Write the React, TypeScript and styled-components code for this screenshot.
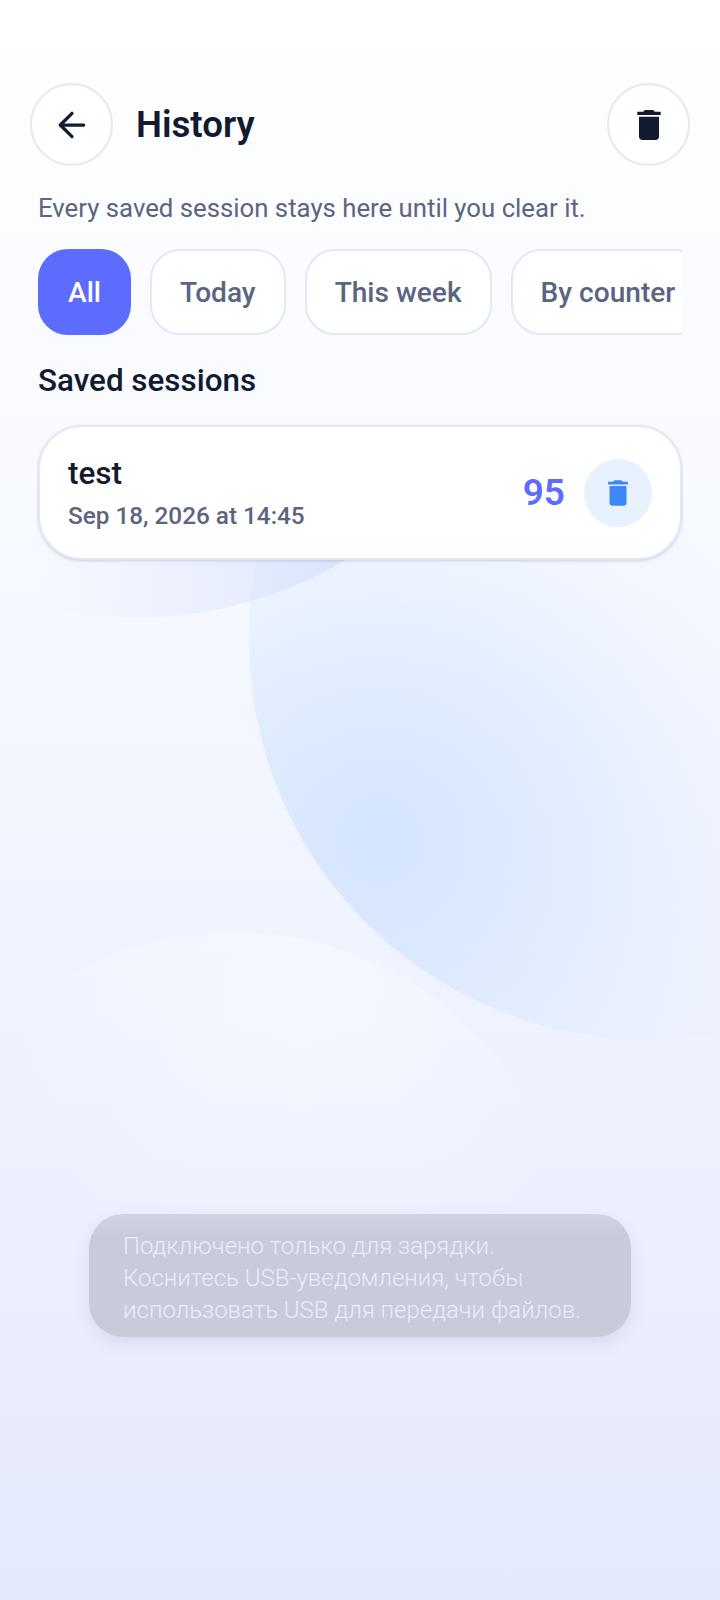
import React from "react";
import styled, { createGlobalStyle } from "styled-components";
import { MdDelete } from "react-icons/md";
import { ArrowLeft } from "lucide-react";

const GlobalStyle = createGlobalStyle`
  html, body {
    margin: 0;
    padding: 0;
  }
  body {
    font-family: Roboto, "Noto Sans", sans-serif;
  }
`;

const filters = ["All", "Today", "This week", "By counter"];

const App = () => {
  return (
    <Screen>
      <GlobalStyle />
      <CornerBlob />
      <BigBlob />
      <LowBlob />
      <Content>
        <Header>
          <TitleGroup>
            <RoundButton aria-label="Back">
              <ArrowLeft size={40} strokeWidth={1.95} color="#111a2e" />
            </RoundButton>
            <Title>History</Title>
          </TitleGroup>
          <RoundButton aria-label="Clear history">
            <MdDelete size={40} color="#111a2e" />
          </RoundButton>
        </Header>
        <Body>
          <Subtitle>Every saved session stays here until you clear it.</Subtitle>
          <Filters>
            {filters.map((label, i) => (
              <Chip key={label} $active={i === 0}>
                {label}
              </Chip>
            ))}
          </Filters>
          <SectionTitle>Saved sessions</SectionTitle>
          <Card>
            <CardInfo>
              <CardName>test</CardName>
              <CardDate>Sep 18, 2026 at 14:45</CardDate>
            </CardInfo>
            <CardSide>
              <Count>95</Count>
              <DeleteButton aria-label="Delete session">
                <MdDelete size={34} color="#3f88fb" />
              </DeleteButton>
            </CardSide>
          </Card>
        </Body>
      </Content>
      <Toast>
        Подключено только для зарядки.
        <br />
        Коснитесь USB-уведомления, чтобы
        <br />
        использовать USB для передачи файлов.
      </Toast>
    </Screen>
  );
};

const Screen = styled.div`
  position: relative;
  width: 720px;
  height: 1600px;
  overflow: hidden;
  background: linear-gradient(180deg, #ffffff 0%, #f6f9ff 35%, #edf1fe 71%, #e4e9fc 100%);
`;

/* the tinted part only starts below the card's top edge */
const BigBlob = styled.div`
  position: absolute;
  left: 249px;
  top: 240px;
  width: 800px;
  height: 800px;
  border-radius: 50%;
  background: radial-gradient(
      circle 440px at 131px 413px,
      rgba(205, 224, 255, 0.8) 0,
      rgba(205, 224, 255, 0.55) 130px,
      rgba(205, 224, 255, 0.28) 250px,
      rgba(205, 224, 255, 0.1) 340px,
      rgba(205, 224, 255, 0) 440px
    )
    no-repeat bottom / 100% 615px;
`;

const CornerBlob = styled.div`
  position: absolute;
  left: -285px;
  top: -218px;
  width: 836px;
  height: 836px;
  border-radius: 50%;
  background: radial-gradient(
      circle 300px at 625px 135px,
      rgba(222, 229, 252, 0.95) 0,
      rgba(222, 229, 252, 0.42) 150px,
      rgba(222, 229, 252, 0) 300px
    )
    no-repeat bottom / 100% 193px;
`;

const LowBlob = styled.div`
  position: absolute;
  left: -106px;
  top: 932px;
  width: 680px;
  height: 680px;
  border-radius: 50%;
  background: radial-gradient(
    circle 310px at 408px 68px,
    rgba(255, 255, 255, 0.42) 0,
    rgba(255, 255, 255, 0.22) 130px,
    rgba(255, 255, 255, 0) 310px
  );
`;

const Content = styled.div`
  position: relative;
  padding-top: 83px;
`;

const Header = styled.header`
  display: flex;
  align-items: center;
  justify-content: space-between;
  padding: 0 30px;
`;

const TitleGroup = styled.div`
  display: flex;
  align-items: center;
  gap: 23px;
`;

const RoundButton = styled.button`
  display: flex;
  align-items: center;
  justify-content: center;
  box-sizing: border-box;
  width: 83px;
  height: 83px;
  padding: 0;
  border: 2px solid #e2e8f6;
  border-radius: 50%;
  background: #ffffff;
`;

const Title = styled.h1`
  margin: 0;
  font-size: 36.7px;
  line-height: 42px;
  font-weight: 600;
  color: #111a2e;
`;

const Body = styled.main`
  display: flex;
  flex-direction: column;
  padding: 0 38px;
`;

const Subtitle = styled.p`
  margin: 25px 0 0;
  font-size: 25.75px;
  line-height: 34px;
  color: #5b6580;
`;

const Filters = styled.div`
  display: flex;
  gap: 19px;
  margin-top: 24px;
  overflow: hidden;
`;

const Chip = styled.div<{ $active: boolean }>`
  flex: none;
  box-sizing: border-box;
  height: 86px;
  padding: 0 28px;
  display: flex;
  align-items: center;
  border: 2px solid ${(p) => (p.$active ? "#5b6cff" : "#e2e8f6")};
  border-radius: 30px;
  background: ${(p) => (p.$active ? "#5b6cff" : "#ffffff")};
  color: ${(p) => (p.$active ? "#ffffff" : "#5b6580")};
  font-size: 28.1px;
  font-weight: 500;
`;

const SectionTitle = styled.h2`
  margin: 28px 0 0;
  font-size: 31.4px;
  line-height: 36px;
  font-weight: 500;
  color: #111a2e;
`;

const Card = styled.section`
  display: flex;
  align-items: center;
  justify-content: space-between;
  box-sizing: border-box;
  height: 135px;
  margin-top: 26px;
  padding: 0 28px;
  border: 2px solid #e2e8f6;
  border-radius: 44px;
  background: #ffffff;
  box-shadow: 0 1px 3px rgba(90, 105, 150, 0.28);
`;

const CardInfo = styled.div`
  display: flex;
  flex-direction: column;
  gap: 8px;
`;

const CardName = styled.div`
  font-size: 31.5px;
  line-height: 38px;
  font-weight: 500;
  color: #111a2e;
`;

const CardDate = styled.div`
  font-size: 24.3px;
  line-height: 30px;
  font-weight: 500;
  color: #5b6580;
`;

const CardSide = styled.div`
  display: flex;
  align-items: center;
  gap: 19px;
`;

const Count = styled.div`
  font-size: 37px;
  font-weight: 600;
  color: #5b6cff;
`;

const DeleteButton = styled.button`
  display: flex;
  align-items: center;
  justify-content: center;
  width: 68px;
  height: 68px;
  padding: 0;
  border: none;
  border-radius: 50%;
  background: #e8f1fe;
`;

const Toast = styled.div`
  position: absolute;
  left: 89px;
  top: 1214px;
  box-sizing: border-box;
  width: 542px;
  height: 123px;
  padding: 16px 34px;
  border-radius: 34px;
  background: linear-gradient(180deg, #d0d3e0 0, #c8cbda 22px);
  box-shadow: 0 6px 16px rgba(120, 130, 170, 0.16);
  color: #eaedf7;
  font-size: 24px;
  line-height: 32px;
  font-weight: 300;
`;

export default App;
